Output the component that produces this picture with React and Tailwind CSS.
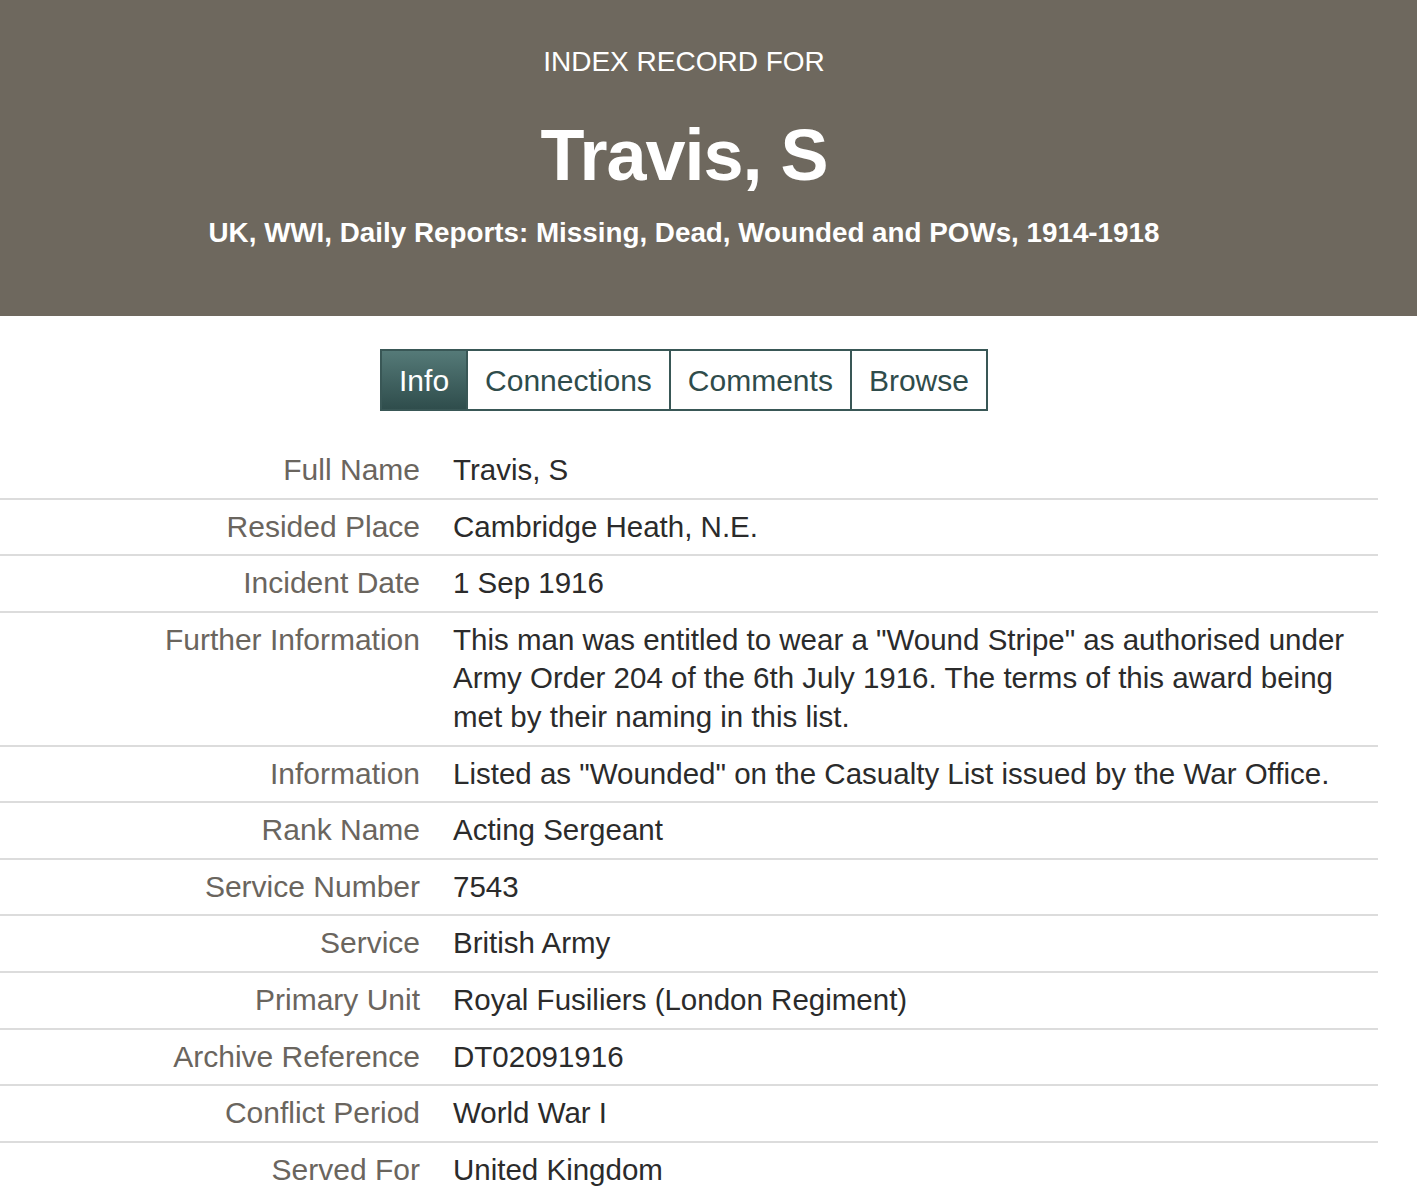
const rows = [
  ['Full Name', 'Travis, S'],
  ['Resided Place', 'Cambridge Heath, N.E.'],
  ['Incident Date', '1 Sep 1916'],
  ['Further Information', 'This man was entitled to wear a "Wound Stripe" as authorised under Army Order 204 of the 6th July 1916. The terms of this award being met by their naming in this list.'],
  ['Information', 'Listed as "Wounded" on the Casualty List issued by the War Office.'],
  ['Rank Name', 'Acting Sergeant'],
  ['Service Number', '7543'],
  ['Service', 'British Army'],
  ['Primary Unit', 'Royal Fusiliers (London Regiment)'],
  ['Archive Reference', 'DT02091916'],
  ['Conflict Period', 'World War I'],
  ['Served For', 'United Kingdom'],
];

const tabs = ['Info', 'Connections', 'Comments', 'Browse'];

export default function App() {
  return (
    <div className="min-h-screen bg-white font-['Liberation_Sans',Arial,sans-serif]">
      {/* Header */}
      <div className="bg-[#6e685e] text-white pt-[44px] pb-[65px]">
        <div className="w-[1368px] text-center">
          <p className="text-[28px] leading-[36px]">INDEX RECORD FOR</p>
          <h1 className="mt-[35px] text-[72px] leading-[80px] font-bold tracking-[-1px]">Travis, S</h1>
          <p className="mt-[20px] text-[27.8px] leading-[36px] font-bold">
            UK, WWI, Daily Reports: Missing, Dead, Wounded and POWs, 1914-1918
          </p>
        </div>
      </div>

      {/* Tabs */}
      <div className="w-[1368px] flex justify-center mt-[33px]">
        <div className="flex border-2 border-[#395756]">
          {tabs.map((t, i) => (
            <div
              key={t}
              className={
                i === 0
                  ? 'px-[17px] h-[58px] flex items-center text-[30px] text-white bg-gradient-to-b from-[#557a78] to-[#2f4d4c]'
                  : 'px-[17px] h-[58px] flex items-center text-[30px] text-[#2f4c4b] bg-white border-l-2 border-[#395756]'
              }
            >
              {t}
            </div>
          ))}
        </div>
      </div>

      {/* Record table */}
      <div className="mt-[32px] w-[1378px]">
        {rows.map(([label, value]) => (
          <div key={label} className="flex border-b-2 border-[#dcdcdc] py-2 leading-[38.6px]">
            <div className="w-[436px] shrink-0 pr-4 text-right text-[30px] text-[#6a655e]">{label}</div>
            <div className="flex-1 pl-[17px] pr-4 text-[29.5px] text-[#2b2b2b]">{value}</div>
          </div>
        ))}
      </div>
    </div>
  );
}
